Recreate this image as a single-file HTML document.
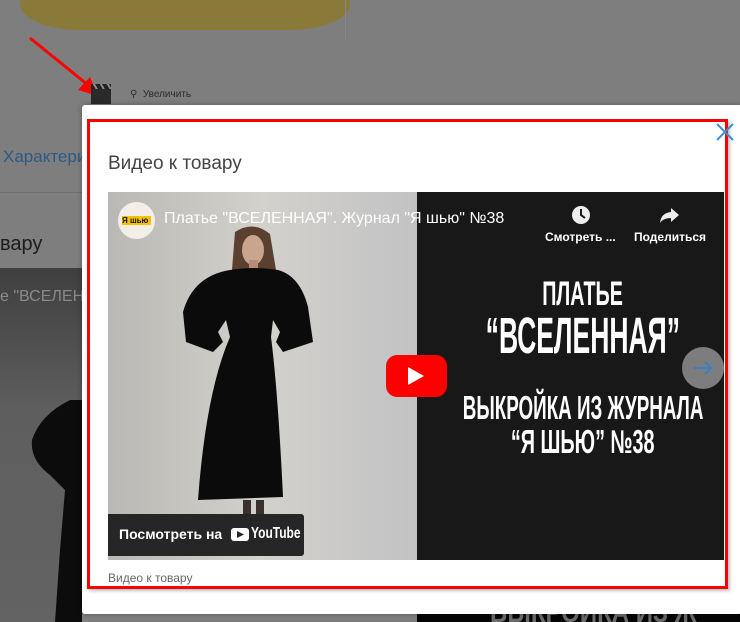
<!DOCTYPE html>
<html><head><meta charset="utf-8"><style>
*{margin:0;padding:0;box-sizing:border-box}
html,body{width:740px;height:622px;overflow:hidden}
body{position:relative;background:#7e7e7e;font-family:"Liberation Sans","Noto Sans CJK JP",sans-serif}
.abs{position:absolute}
.cond{font-family:"Liberation Sans Narrow","Liberation Sans",sans-serif;font-weight:bold;color:#fff;white-space:nowrap}
.ln{position:absolute;left:175px;width:600px;text-align:center}
.ln span{display:inline-block}
</style></head><body>
<!-- background page (dimmed) -->
<div class="abs" style="left:20px;top:0;width:330px;height:30px;background:#8a7a3a;border-radius:0 0 60px 60px/0 0 26px 26px"></div>
<div class="abs" style="left:345px;top:0;width:1px;height:40px;background:#888"></div>
<svg class="abs" style="left:20px;top:30px" width="90" height="75"><line x1="10" y1="8" x2="68" y2="55" stroke="#f00" stroke-width="3"/><polygon points="78,66 58,60 70,47" fill="#f00"/></svg>
<div class="abs" style="left:91px;top:88px;width:20px;height:16px;background:#2a2a2a"></div>
<div class="abs" style="left:91px;top:84px;width:20px;height:5px;background:repeating-linear-gradient(60deg,#222 0 4px,#888 4px 6px)"></div>
<div class="abs" style="left:130px;top:89px;font-size:10px;color:#2c2c2c">&#9906;&nbsp;&nbsp;Увеличить</div>
<div class="abs" style="left:3px;top:147px;font-size:17px;color:#2a5a86">Характери</div>
<div class="abs" style="left:0;top:192px;width:82px;height:1px;background:#6f6f6f"></div>
<div class="abs" style="left:0;top:233px;font-size:20px;color:#1c1c1c">вару</div>
<div class="abs" style="left:0;top:268px;width:82px;height:354px;background:linear-gradient(#3f3f3f,#5e5e5e 40%,#636363)"></div>
<div class="abs" style="left:0;top:288px;font-size:16px;color:#8a8a8a">е "ВСЕЛЕН</div>
<svg class="abs" style="left:0;top:400px" width="82" height="222"><path d="M70 0 Q40 15 32 40 Q30 60 50 75 L65 90 L60 150 L55 222 L82 222 L82 0Z" fill="#0c0c0c"/></svg>
<div class="abs" style="left:417px;top:600px;width:323px;height:22px;background:#050505"></div>
<div class="abs cond" style="left:490px;top:598px;font-size:30px;line-height:30px;color:#6a6a6a;transform:scaleX(.8);transform-origin:left">ВЫКРОЙКА ИЗ Ж</div>

<!-- modal -->
<div class="abs" style="left:82px;top:105px;width:660px;height:509px;background:#fff;border-radius:3px;box-shadow:0 0 6px rgba(0,0,0,.3)"></div>
<div class="abs" style="left:87px;top:119px;width:641px;height:470px;border:3px solid #f00;box-shadow:2px 2px 3px rgba(0,0,0,.25)"></div>
<svg class="abs" style="left:715px;top:122px" width="20" height="20"><path d="M2 2L18 18M18 2L2 18" stroke="#3a8fd8" stroke-width="2"/></svg>
<div class="abs" style="left:108px;top:153px;font-size:19px;color:#444">Видео к товару</div>
<div class="abs" style="left:108px;top:571px;font-size:12px;color:#666">Видео к товару</div>

<!-- video -->
<div class="abs" style="left:108px;top:192px;width:616px;height:368px;overflow:hidden;background:#181818">
 <div class="abs" style="left:0;top:0;width:309px;height:368px;background:linear-gradient(90deg,#b9b8b4,#d3d1cc 50%,#c2c2c4)"></div>
 <svg class="abs" style="left:0;top:0" width="309" height="368">
  <path d="M127 40 Q145 28 162 42 L168 78 L124 78 Z" fill="#5b4030"/>
  <ellipse cx="145" cy="58" rx="11" ry="15" fill="#c9a48e"/>
  <rect x="141" y="68" width="9" height="10" fill="#b68e78"/>
  <path d="M122 78 Q145 74 170 78 Q192 84 200 115 L205 150 L175 160 L168 150 L172 140 L165 128 L163 145 Q170 200 175 305 L90 308 Q98 200 122 145 L118 128 L110 140 L115 150 L105 160 L78 150 L75 120 Q85 84 122 78Z" fill="#0b0b0b"/>
  <rect x="135" y="308" width="8" height="25" fill="#3a302c"/><rect x="148" y="308" width="8" height="25" fill="#3a302c"/>
 </svg>
 <div class="abs" style="left:10px;top:10px;width:37px;height:37px;border-radius:50%;background:#f3efe8"></div>
 <div class="abs" style="left:14px;top:24px;width:29px;height:9px;background:#f2c200;font-size:8px;font-weight:bold;line-height:9px;color:#111">Я шью</div>
 <div class="abs" style="left:56px;top:18px;font-size:16px;color:#fff;white-space:nowrap">Платье "ВСЕЛЕННАЯ". Журнал "Я шью" №38</div>
 <svg class="abs" style="left:462px;top:12px" width="22" height="22"><circle cx="11" cy="11" r="9" fill="#eee"/><path d="M11 5V11L15 14" stroke="#181818" stroke-width="2" fill="none"/></svg>
 <div class="abs" style="left:437px;top:38px;font-size:12px;font-weight:bold;color:#fff">Смотреть ...</div>
 <svg class="abs" style="left:550px;top:12px" width="22" height="22"><path d="M13 4L21 11L13 18V14Q5 14 2 19Q3 9 13 8Z" fill="#eee"/></svg>
 <div class="abs" style="left:526px;top:38px;font-size:12px;font-weight:bold;color:#fff">Поделиться</div>
 <div class="ln cond" style="top:82px;font-size:34px;line-height:40px"><span style="transform:scaleX(.58)">ПЛАТЬЕ</span></div>
 <div class="ln cond" style="top:116px;font-size:51px;line-height:56px"><span style="transform:scaleX(.52)">“ВСЕЛЕННАЯ”</span></div>
 <div class="ln cond" style="top:198px;font-size:33px;line-height:36px"><span style="transform:scaleX(.57)">ВЫКРОЙКА ИЗ ЖУРНАЛА</span></div>
 <div class="ln cond" style="top:232px;font-size:33px;line-height:36px"><span style="transform:scaleX(.6)">“Я ШЬЮ” №38</span></div>
 <div class="abs" style="left:278px;top:163px;width:61px;height:42px;background:#f00;border-radius:11px"></div>
 <svg class="abs" style="left:300px;top:175px" width="18" height="18"><path d="M0 0L16 9L0 18Z" fill="#fff"/></svg>
 <div class="abs" style="left:574px;top:155px;width:42px;height:42px;border-radius:50%;background:#7d7d7d"></div>
 <svg class="abs" style="left:584px;top:168px" width="22" height="16"><path d="M2 8H19M13 2L19 8L13 14" stroke="#3a7fc0" stroke-width="2" fill="none"/></svg>
 <div class="abs" style="left:0;top:322px;width:196px;height:42px;background:#262626;border-radius:0 3px 3px 0"></div>
 <div class="abs" style="left:11px;top:334px;font-size:14px;font-weight:bold;color:#fff">Посмотреть на</div>
 <div class="abs" style="left:123px;top:336px;width:18px;height:13px;background:#fff;border-radius:3px"></div>
 <svg class="abs" style="left:129px;top:339px" width="7" height="7"><path d="M0 0L7 3.5L0 7Z" fill="#262626"/></svg>
 <div class="abs cond" style="left:143px;top:333px;font-size:16px;transform:scaleX(.75);transform-origin:left">YouTube</div>
</div>
</body></html>
